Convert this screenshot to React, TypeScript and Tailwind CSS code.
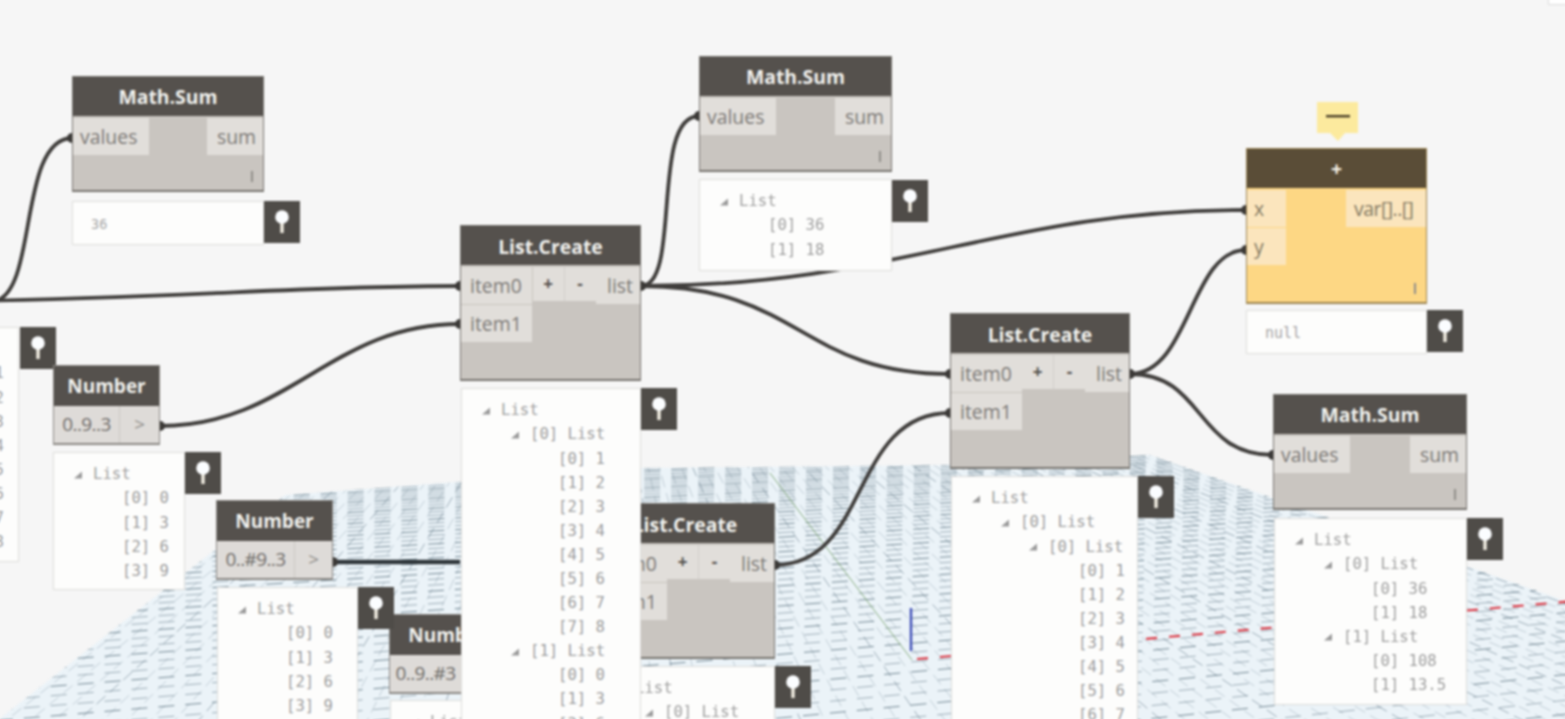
import React from 'react';

type Row = [number, string, boolean?];

const indents = ['pl-[19px]', 'pl-[48px]', 'pl-[76px]', 'pl-[106px]'];

const flat = (n: number, vals: string[]): Row[] => vals.map((v, i) => [n, `[${i}] ${v}`] as Row);

const Pin: React.FC<{ className: string }> = ({ className }) => (
  <div className={`absolute w-[36px] h-[42px] bg-[#4f4c48] ${className}`}>
    <svg viewBox="0 0 36 42" className="w-full h-full">
      <rect x="16.3" y="20" width="3.4" height="12" fill="#f3efe4" />
      <circle cx="18" cy="16" r="6.8" fill="#fbfdff" />
    </svg>
  </div>
);

const Arrow: React.FC<{ show?: boolean }> = ({ show }) => (
  <span className="w-[20px] h-[10px] shrink-0">
    {show && (
      <svg viewBox="0 0 10 10" className="w-[10px] h-[10px]">
        <polygon points="9,1.5 9,8.5 1,8.5" fill="#9a9a9a" />
      </svg>
    )}
  </span>
);

const Preview: React.FC<{ className: string; rows: Row[] }> = ({ className, rows }) => (
  <div className={`absolute overflow-hidden bg-[#fdfdfc] border border-[#dddcda] pt-[10px] font-['DejaVu_Sans_Mono',monospace] text-[15.6px] text-[#9e9e9e] ${className}`}>
    {rows.map(([level, text, arrow], i) => (
      <div key={i} className={`flex items-center h-[24.1px] whitespace-pre ${indents[level]}`}>
        <Arrow show={arrow} />
        {text}
      </div>
    ))}
  </div>
);

const Single: React.FC<{ className: string; text: string }> = ({ className, text }) => (
  <div className={`absolute h-[44px] flex items-center pl-[18px] pt-[2px] bg-[#fdfdfc] border border-[#dddcda] font-['DejaVu_Sans_Mono',monospace] text-[#a6a6a6] ${className}`}>
    {text}
  </div>
);

const Port: React.FC<{ className?: string; children: React.ReactNode }> = ({ className = '', children }) => (
  <div className={`h-[37px] flex items-center px-[7px] bg-[#e1deda] ${className}`}>{children}</div>
);

const Lacing: React.FC = () => (
  <span className="absolute right-[10px] bottom-[8px] w-[2px] h-[11px] bg-[#918e8a]" />
);

const MathSum: React.FC<{ className: string }> = ({ className }) => (
  <div className={`absolute h-[116px] flex flex-col bg-[#c9c5c0] border border-[#77746f] border-b-2 font-['Open_Sans',sans-serif] text-[19.4px] text-[#7c7976] ${className}`}>
    <div className="h-[39px] shrink-0 flex items-center justify-center pt-[1px] bg-[#55514d] text-[#f1f1ee] font-bold">Math.Sum</div>
    <div className="flex justify-between pt-[2px]">
      <Port className="w-[76px]">values</Port>
      <Port className="w-[56px] justify-end">sum</Port>
    </div>
    <Lacing />
  </div>
);

const ListCreate: React.FC<{ className: string }> = ({ className }) => (
  <div className={`absolute h-[156px] flex flex-col bg-[#c9c5c0] border border-[#77746f] border-b-2 font-['Open_Sans',sans-serif] text-[19.4px] text-[#7c7976] ${className}`}>
    <div className="h-[39px] shrink-0 flex items-center justify-center pt-[2px] bg-[#55514d] text-[#f1f1ee] font-bold">List.Create</div>
    <div className="flex justify-between pt-[2px]">
      <Port className="w-[71px] pl-[9px]">item0</Port>
      <div className="flex h-[34px] bg-[#e1deda] text-[#55514d] text-[17px] font-bold">
        <span className="w-[32px] flex items-center justify-center border-r border-[#d2cfcb]">+</span>
        <span className="w-[31px] flex items-center justify-center">-</span>
      </div>
      <Port className="w-[44px] justify-end px-[4px]">list</Port>
    </div>
    <Port className="w-[71px] mt-[1px] pl-[9px]">item1</Port>
  </div>
);

const NumberNode: React.FC<{ className: string; value: string; width: string }> = ({ className, value, width }) => (
  <div className={`absolute h-[80px] flex flex-col bg-[#dedbd8] border border-[#8b8884] border-b-2 font-['Open_Sans',sans-serif] text-[19px] text-[#6f6c69] ${className}`}>
    <div className="h-[40px] shrink-0 flex items-center justify-center bg-[#55514d] text-[#f1f1ee] font-bold">Number</div>
    <div className="flex flex-1 items-center tracking-[-0.6px]">
      <div className={`h-full flex items-center justify-center border-r border-[#cbc8c4] ${width}`}>{value}</div>
      <div className="flex-1 flex items-center justify-center text-[#8b8884]">&gt;</div>
    </div>
  </div>
);

// perspective grid: two line families running to two vanishing points on the horizon
const GridFloor: React.FC = () => {
  const vp1 = { x: 600, y: 250 };
  const vp2 = { x: 5565, y: 250 };
  const cross = Array.from({ length: 90 }, (_, i) => -40 + i * 24);
  const depth = Array.from({ length: 60 }, (_, i) => 1 / 215 - i * 5.4e-5).filter((d) => d > 0.0012);
  const floor = '-30,742 285,495 640,468 950,465 1150,455 1620,620 1620,780 -30,780';
  return (
    <svg viewBox="0 0 1620 780" className="absolute left-0 top-0 w-[1620px] h-[780px]">
      <defs>
        <clipPath id="floor">
          <polygon points={floor} />
        </clipPath>
      </defs>
      <polygon points={floor} fill="#ebf3f8" />
      <g clipPath="url(#floor)" fill="none">
        {cross.map((x, i) => (
          <line key={i} x1={vp1.x} y1={vp1.y} x2={vp1.x + (x - vp1.x) * 1.3} y2={vp1.y + 469 * 1.3} stroke="#6f8592" strokeWidth="0.8" strokeDasharray="12 6" opacity={i % 5 === 0 ? 0.8 : 0.42} />
        ))}
        {depth.map((d, i) => {
          const y = vp1.y + 1 / d;
          const slope = (vp2.y - y) / (vp2.x - vp1.x);
          return (
            <line key={i} x1={-30} y1={y + slope * (-30 - vp1.x)} x2={1620} y2={y + slope * (1620 - vp1.x)} stroke="#5f7583" strokeWidth="1" strokeDasharray="16 11" opacity={i % 3 === 0 ? 0.85 : 0.55} />
          );
        })}
      </g>
      <line x1="770" y1="473" x2="912" y2="660" stroke="#6f9a62" strokeWidth="1" opacity="0.8" />
      <line x1="917" y1="659" x2="1620" y2="597" stroke="#dc3a46" strokeWidth="2.2" strokeDasharray="11 12" />
      <line x1="911" y1="608" x2="911" y2="651" stroke="#3f4fb8" strokeWidth="2.4" />
    </svg>
  );
};

const wires = [
  'M-30 301 C 200 297, 300 286, 460 286',
  'M-5 301 C 38 292, 18 139, 72 138',
  'M160 426 C 290 426, 330 324, 460 324',
  'M641 286 C 682 286, 650 116, 699 116',
  'M641 286 C 900 286, 1000 210, 1246 210',
  'M641 286 C 800 286, 800 374, 950 374',
  'M775 565 C 870 565, 850 413, 950 413',
  'M1130 374 C 1190 374, 1190 250, 1246 250',
  'M1130 374 C 1205 374, 1195 455, 1273 455',
];

const nubs = [
  [72, 138], [460, 286], [460, 324], [160, 426], [641, 286], [699, 116], [950, 374],
  [950, 413], [775, 565], [1130, 374], [1246, 210], [1246, 250], [1273, 455], [333, 562],
];

const Wires: React.FC = () => (
  <svg viewBox="-40 0 1605 719" className="absolute left-[-40px] top-0 w-[1605px] h-[719px]">
    <g fill="none" stroke="#403e3c" strokeWidth="3.8">
      {wires.map((d, i) => (
        <path key={i} d={d} />
      ))}
    </g>
    <line x1="333" y1="562" x2="460" y2="562" stroke="#2f363a" strokeWidth="4.5" />
    {nubs.map(([x, y], i) => (
      <circle key={i} cx={x} cy={y} r="5" fill="#3a3836" />
    ))}
  </svg>
);

const App: React.FC = () => {
  return (
    <div className="w-[1565px] h-[719px] overflow-hidden bg-[#f6f6f6]">
      {/* the blur sits on an unclipped layer so it does not fade at the window edge */}
      <div className="relative w-[1565px] h-[719px] blur-[0.8px]">
        <GridFloor />
        <Wires />

        {/* corner of a panel, cut by the window */}
        <div className="absolute left-[1548px] top-[-6px] w-[30px] h-[11px] bg-white border border-[#dcdcdc]" />

        {/* far left, cut by the window */}
        <Preview className="left-[-112px] top-[327px] w-[131px] h-[235px]" rows={[[0, 'List', true], ...flat(1, ['1', '2', '3', '4', '5', '6', '7', '8'])]} />
        <Pin className="left-[20px] top-[327px]" />

        <MathSum className="left-[72px] top-[76px] w-[192px]" />
        <Single className="left-[72px] top-[201px] w-[192px] text-[13.5px]" text="36" />
        <Pin className="left-[264px] top-[201px]" />

        <NumberNode className="left-[53px] top-[365px] w-[107px]" value="0..9..3" width="w-[66px]" />
        <Preview className="left-[53px] top-[452px] w-[132px] h-[138px]" rows={[[0, 'List', true], ...flat(1, ['0', '3', '6', '9'])]} />
        <Pin className="left-[185px] top-[452px]" />

        <NumberNode className="left-[216px] top-[500px] w-[117px]" value="0..#9..3" width="w-[78px]" />
        <Preview className="left-[217px] top-[587px] w-[141px] h-[140px]" rows={[[0, 'List', true], ...flat(1, ['0', '3', '6', '9'])]} />

        <NumberNode className="left-[389px] top-[614px] w-[117px]" value="0..9..#3" width="w-[72px]" />
        <Preview className="left-[390px] top-[700px] w-[90px] h-[40px]" rows={[[0, 'List', true]]} />
        <Pin className="left-[358px] top-[587px]" />

        <ListCreate className="left-[595px] top-[503px] w-[180px]" />
        <Preview className="left-[595px] top-[666px] w-[180px] h-[60px]" rows={[[0, 'List', true], [1, '[0] List', true]]} />
        <Pin className="left-[775px] top-[666px]" />

        <ListCreate className="left-[460px] top-[225px] w-[181px]" />
        <Preview
          className="left-[461px] top-[388px] w-[180px] h-[340px]"
          rows={[
            [0, 'List', true],
            [1, '[0] List', true],
            ...flat(2, ['1', '2', '3', '4', '5', '6', '7', '8']),
            [1, '[1] List', true],
            ...flat(2, ['0', '3', '6']),
          ]}
        />
        <Pin className="left-[641px] top-[388px]" />

        <MathSum className="left-[699px] top-[56px] w-[193px]" />
        <Preview className="left-[699px] top-[179px] w-[193px] h-[92px]" rows={[[0, 'List', true], ...flat(1, ['36', '18'])]} />
        <Pin className="left-[892px] top-[180px]" />

        <ListCreate className="left-[950px] top-[313px] w-[180px]" />
        <Preview
          className="left-[951px] top-[476px] w-[187px] h-[260px]"
          rows={[
            [0, 'List', true],
            [1, '[0] List', true],
            [2, '[0] List', true],
            ...flat(3, ['1', '2', '3', '4', '5', '6', '7']),
          ]}
        />
        <Pin className="left-[1138px] top-[476px]" />

        {/* yellow warning node */}
        <svg viewBox="0 0 41 40" className="absolute left-[1317px] top-[102px] w-[41px] h-[40px]">
          <polygon points="0,0 41,0 41,31 28,31 21,39 13,31 0,31" fill="#fcea9e" />
          <rect x="9" y="13" width="24" height="2.4" fill="#4a3f26" />
        </svg>
        <div className="absolute left-[1246px] top-[148px] w-[181px] h-[156px] flex flex-col bg-[#fdd784] border border-[#9c8450] border-b-2 font-['Open_Sans',sans-serif] text-[19.4px] text-[#847a63]">
          <div className="h-[39px] shrink-0 flex items-center justify-center bg-[#5a4d37] text-[#f6f3e8] font-bold">+</div>
          <div className="flex justify-between pt-[2px]">
            <div className="flex flex-col gap-[1px]">
              <Port className="w-[39px] bg-[#fbe5bd]">x</Port>
              <Port className="w-[39px] bg-[#fbe5bd]">y</Port>
            </div>
            <Port className="w-[80px] bg-[#fbe5bd] whitespace-nowrap px-[8px] tracking-[-0.5px]">var[]..[]</Port>
          </div>
          <Lacing />
        </div>
        <Single className="left-[1246px] top-[310px] w-[181px] text-[15px]" text="null" />
        <Pin className="left-[1427px] top-[310px]" />

        <MathSum className="left-[1273px] top-[394px] w-[194px]" />
        <Preview
          className="left-[1274px] top-[518px] w-[193px] h-[187px]"
          rows={[
            [0, 'List', true],
            [1, '[0] List', true],
            ...flat(2, ['36', '18']),
            [1, '[1] List', true],
            ...flat(2, ['108', '13.5']),
          ]}
        />
        <Pin className="left-[1467px] top-[518px]" />
      </div>
    </div>
  );
};

export default App;
